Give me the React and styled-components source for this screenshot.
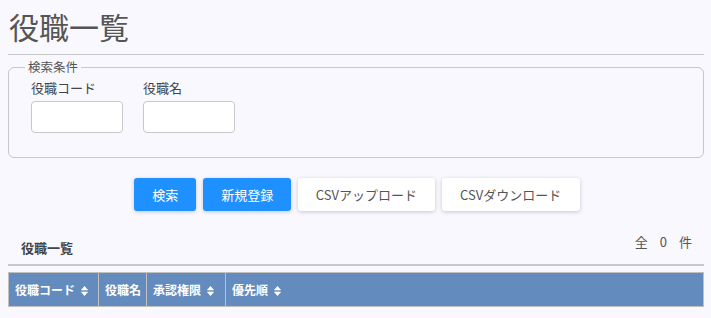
import React from "react";
import styled, { createGlobalStyle } from "styled-components";

const Global = createGlobalStyle`
  html, body { margin: 0; padding: 0; background: #f8f8fe; }
  body { font-family: "Noto Sans CJK JP", "Noto Sans", sans-serif; color: #555; }
  * { box-sizing: border-box; }
`;

const Page = styled.div`
  padding: 0 7px 0 8px;
`;

const Title = styled.h1`
  margin: 0;
  padding: 7px 0 9px 1px;
  font-size: 30px;
  font-weight: 400;
  line-height: 38px;
  color: #555;
  border-bottom: 1px solid #c8c8c8;
`;

const Fieldset = styled.fieldset`
  margin: 5px 0 0 0;
  padding: 6px 22px 24px 22px;
  border: 1px solid #c8c8c8;
  border-radius: 6px;
  min-width: 0;
`;

const Legend = styled.legend`
  padding: 0 3px;
  margin-left: -6px;
  font-size: 12.5px;
  line-height: 14px;
  color: #555;
`;

const Fields = styled.div`
  display: flex;
  gap: 20px;
`;

const Field = styled.label`
  display: flex;
  flex-direction: column;
  gap: 5px;
  font-size: 13px;
  line-height: 16px;
  color: #444;
`;

const Input = styled.input`
  width: 92px;
  height: 32px;
  border: 1px solid #c8c8c8;
  border-radius: 4px;
  background: #fff;
`;

const Buttons = styled.div`
  display: flex;
  justify-content: center;
  gap: 7px;
  margin-top: 20px;
  padding-left: 2px;
`;

const Button = styled.button`
  height: 33px;
  padding: 0 ${(p) => p.$px}px;
  border: none;
  border-radius: 3px;
  font-family: inherit;
  font-size: 13px;
  background: ${(p) => (p.$primary ? "#1e90ff" : "#fff")};
  color: ${(p) => (p.$primary ? "#fff" : "#555")};
  box-shadow: 0 1px 4px rgba(0, 0, 0, 0.2);
  cursor: pointer;
`;

const ListHead = styled.div`
  display: flex;
  justify-content: space-between;
  align-items: flex-end;
  margin-top: 21px;
  padding: 0 12px 7px 13px;
  border-bottom: 2px solid #c8c8c8;
`;

const SubTitle = styled.div`
  font-size: 13px;
  font-weight: 700;
  color: #444;
  line-height: 20px;
  position: relative;
  top: 1px;
`;

const Count = styled.div`
  display: flex;
  gap: 12px;
  font-size: 13px;
  color: #555;
  line-height: 20px;
  margin-bottom: 5px;
`;

const Table = styled.table`
  width: 100%;
  margin-top: 6px;
  border-collapse: collapse;
  table-layout: fixed;
`;

const Th = styled.th`
  height: 34px;
  padding: 0 6px;
  background: #638bbd;
  border: 1px solid #c0c0c0;
  color: #fff;
  font-size: 12px;
  font-weight: 700;
  text-align: left;
  white-space: nowrap;
  overflow: hidden;
  width: ${(p) => p.$w || "auto"};
`;

const SortIcon = styled.svg`
  width: 7px;
  height: 10px;
  margin-left: 6px;
  vertical-align: -1px;
`;

const Sort = () => (
  <SortIcon viewBox="0 0 7 10">
    <path d="M3.5 0.3 L6.6 4 H0.4 Z M3.5 9.7 L6.6 6 H0.4 Z" fill="#fff" strokeLinejoin="round" stroke="#fff" strokeWidth="0.6" />
  </SortIcon>
);

export default function App() {
  return (
    <>
      <Global />
      <Page>
        <Title>役職一覧</Title>
        <Fieldset>
          <Legend>検索条件</Legend>
          <Fields>
            <Field>
              役職コード
              <Input />
            </Field>
            <Field>
              役職名
              <Input />
            </Field>
          </Fields>
        </Fieldset>
        <Buttons>
          <Button $primary $px={18}>検索</Button>
          <Button $primary $px={18}>新規登録</Button>
          <Button $px={17.5}>CSVアップロード</Button>
          <Button $px={18.5}>CSVダウンロード</Button>
        </Buttons>
        <ListHead>
          <SubTitle>役職一覧</SubTitle>
          <Count>
            <span>全</span>
            <span>0</span>
            <span>件</span>
          </Count>
        </ListHead>
        <Table>
          <thead>
            <tr>
              <Th $w="90px">役職コード<Sort /></Th>
              <Th $w="48px">役職名</Th>
              <Th $w="79px">承認権限<Sort /></Th>
              <Th>優先順<Sort /></Th>
            </tr>
          </thead>
        </Table>
      </Page>
    </>
  );
}
